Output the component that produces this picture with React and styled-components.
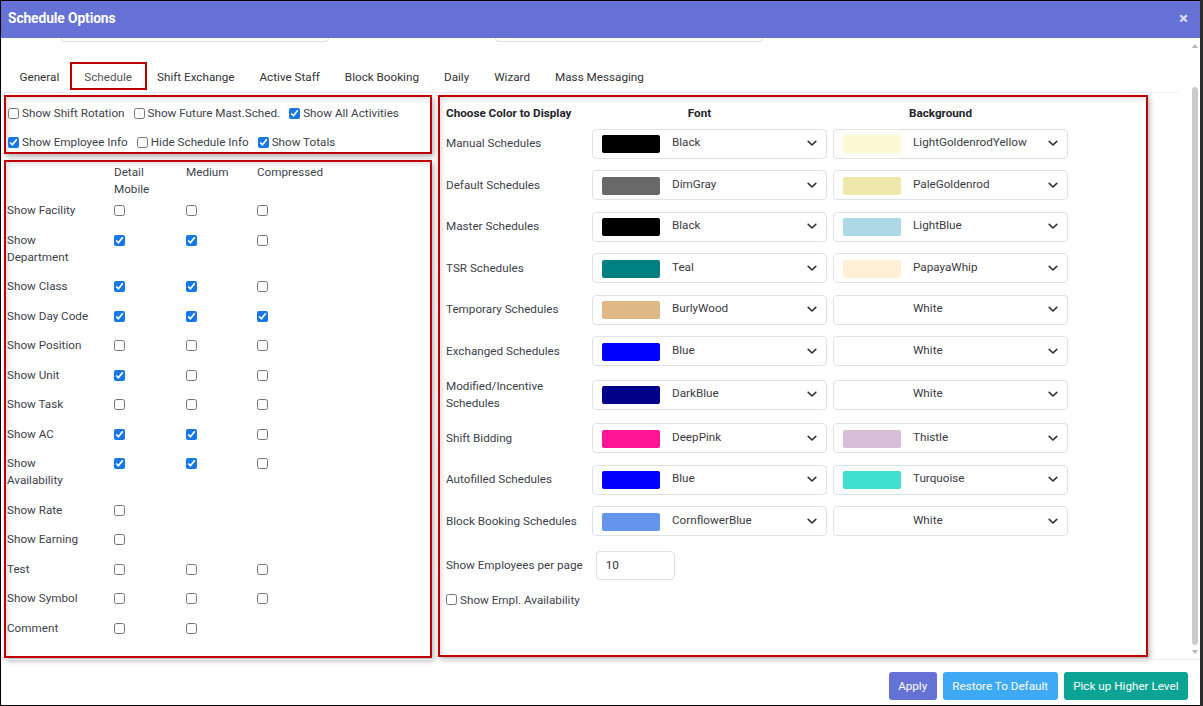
import React from "react";
import styled, { createGlobalStyle } from "styled-components";

const FS = "11.7px";

const GlobalStyle = createGlobalStyle`
  html, body { margin: 0; padding: 0; background: #2b2b2b; }
  body { font-family: Roboto, "Liberation Sans", Arial, sans-serif; }
  * { box-sizing: border-box; }
`;

const Page = styled.div`
  display: flex;
  width: 1203px;
  height: 706px;
  overflow: hidden;
`;

const Modal = styled.div`
  width: 1200px;
  height: 706px;
  background: #fff;
  border-left: 1px solid #000;
  border-top: 1px solid #000;
  border-bottom: 1px solid #000;
  display: flex;
  flex-direction: column;
`;

const TitleBar = styled.div`
  height: 37px;
  flex: none;
  background: #6571d5;
  display: flex;
  align-items: center;
  justify-content: space-between;
  padding: 0 12px 3px 7px;
`;

const Title = styled.div`
  color: #fff;
  font-weight: 700;
  font-size: 13.8px;
  letter-spacing: -0.1px;
`;

const Close = styled.div`
  color: #dcdff5;
  font-weight: 700;
  font-size: 17px;
  line-height: 1;
`;

const Body = styled.div`
  flex: 1;
  display: flex;
  min-height: 0;
`;

const Content = styled.div`
  flex: 1;
  min-width: 0;
  display: flex;
  flex-direction: column;
`;

const PeekRow = styled.div`
  height: 4px;
  display: flex;
  align-items: flex-end;
  overflow: hidden;
`;

const PeekInput = styled.div`
  height: 30px;
  flex: none;
  width: ${(p) => p.$w}px;
  margin-left: ${(p) => p.$ml}px;
  border: 1px solid #dfe2e6;
  border-top: none;
  border-radius: 0 0 4px 4px;
`;

const Tabs = styled.div`
  display: flex;
  padding: 22px 0 4px 6px;
  margin-right: 11px;
  border-bottom: 1px solid #eceef0;
`;

const Tab = styled.div`
  height: 24px;
  line-height: 21px;
  padding: 3px 12.5px 0;
  font-size: ${FS};
  color: ${(p) => (p.$active ? "#555" : "#333")};
  outline: ${(p) => (p.$active ? "2px solid #c00000" : "none")};
  white-space: nowrap;
`;

const Panels = styled.div`
  display: flex;
  align-items: flex-start;
  gap: 6px;
  margin: 2px 0 0 3px;
`;

const LeftColumn = styled.div`
  width: 428px;
  display: flex;
  flex-direction: column;
  gap: 6px;
`;

const Card = styled.div`
  border: 2px solid #c00000;
  background: #fff;
  box-shadow: 2px 3px 5px rgba(0, 0, 0, 0.28), inset 4px 4px 5px -2px rgba(0, 0, 0, 0.13);
  height: ${(p) => p.$h}px;
  width: ${(p) => (p.$w ? `${p.$w}px` : "auto")};
  padding: ${(p) => p.$pad};
`;

const CheckRow = styled.div`
  display: flex;
  align-items: center;
  height: 18px;
  & + & { margin-top: 11px; }
`;

const CheckLabel = styled.label`
  display: inline-flex;
  align-items: center;
  gap: 3px;
  margin-right: 9px;
  font-size: ${FS};
  color: #3d3f4a;
  white-space: nowrap;
`;

const Check = styled.input.attrs({ type: "checkbox" })`
  width: 11px;
  height: 11px;
  margin: 0;
  flex: none;
  accent-color: #1677e6;
`;

const GridRow = styled.div`
  display: grid;
  grid-template-columns: 107px 72px 71px 1fr;
  line-height: 17px;
  font-size: ${FS};
  color: #3d3f4a;
  padding: ${(p) => (p.$header ? "2px 0 0" : "6px 0 6.5px")};
  height: ${(p) => (p.$header ? "34px" : "auto")};
`;

const RowLabel = styled.div`
  padding-right: 20px;
`;

const HeadCell = styled.div`
  padding-right: 12px;
`;

const BoxCell = styled.div`
  height: 17px;
  display: flex;
  align-items: center;
`;

const ColorHeader = styled.div`
  display: grid;
  grid-template-columns: 140px 235px 235px;
  column-gap: 6px;
  line-height: 17px;
  font-size: ${FS};
  font-weight: 700;
  color: #23242b;
  margin-bottom: 7px;
`;

const HeadCenter = styled.div`
  text-align: center;
  padding-right: 20px;
`;

const ColorRow = styled.div`
  display: grid;
  grid-template-columns: 140px 235px 235px;
  column-gap: 6px;
  align-items: center;
  min-height: 30px;
  line-height: 17px;
  font-size: ${FS};
  color: #3d3f4a;
  margin-bottom: 11.5px;
`;

const Select = styled.div`
  height: 30px;
  border: 1px solid #dfe2e7;
  border-radius: 4px;
  display: flex;
  align-items: center;
  padding: 0 9px;
  font-size: ${FS};
  color: #3a3b44;
`;

const Swatch = styled.div`
  width: 58px;
  height: 18px;
  border-radius: 2px;
  flex: none;
  background: ${(p) => p.$c};
  margin-top: 1px;
`;

const SelectText = styled.div`
  margin-left: 12px;
  flex: 1;
  margin-top: -2px;
`;

const Chevron = () => (
  <svg width="10" height="7" viewBox="0 0 10 7" style={{ flex: "none" }}>
    <path d="M1.2 1.4 L5 5 L8.8 1.4" fill="none" stroke="#2f3038" strokeWidth="1.6" strokeLinecap="round" strokeLinejoin="round" />
  </svg>
);

const PerPageRow = styled.div`
  display: flex;
  align-items: center;
  gap: 13px;
  margin-top: 14.5px;
  font-size: ${FS};
  color: #3d3f4a;
`;

const NumberInput = styled.div`
  width: 79px;
  height: 29px;
  border: 1px solid #dfe2e7;
  border-radius: 4px;
  padding-left: 9px;
  display: flex;
  align-items: center;
  color: #333;
`;

const AvailRow = styled.div`
  margin-top: 11.5px;
  height: 17px;
  display: flex;
  align-items: center;
`;

const Scrollbar = styled.div`
  width: 11px;
  flex: none;
  display: flex;
  flex-direction: column;
  align-items: center;
  padding-top: 4px;
`;

const Arrow = styled.div`
  width: 0;
  height: 0;
  border-left: 3px solid transparent;
  border-right: 3px solid transparent;
  ${(p) => (p.$down ? "border-top: 4px solid #b5b5b5;" : "border-bottom: 4px solid #b5b5b5;")}
  margin-top: ${(p) => p.$mt}px;
`;

const Thumb = styled.div`
  width: 6px;
  height: 558px;
  margin-top: 39px;
  border-radius: 3px;
  background: #cbcbcb;
`;

const Footer = styled.div`
  flex: none;
  height: 46px;
  border-top: 1px solid #e9ebee;
  display: flex;
  justify-content: flex-end;
  align-items: flex-start;
  gap: 6px;
  padding: 12px 12px 0 0;
`;

const Button = styled.button`
  height: 28px;
  border: none;
  border-radius: 3px;
  padding: 0 9.5px;
  background: ${(p) => p.$bg};
  color: #fff;
  font-family: Roboto, "Liberation Sans", Arial, sans-serif;
  font-size: ${FS};
`;

const tabs = ["General", "Schedule", "Shift Exchange", "Active Staff", "Block Booking", "Daily", "Wizard", "Mass Messaging"];

const tableRows = [
  ["Show Facility", [false, false, false]],
  ["Show Department", [true, true, false]],
  ["Show Class", [true, true, false]],
  ["Show Day Code", [true, true, true]],
  ["Show Position", [false, false, false]],
  ["Show Unit", [true, false, false]],
  ["Show Task", [false, false, false]],
  ["Show AC", [true, true, false]],
  ["Show Availability", [true, true, false]],
  ["Show Rate", [false]],
  ["Show Earning", [false]],
  ["Test", [false, false, false]],
  ["Show Symbol", [false, false, false]],
  ["Comment", [false, false]],
];

const colorRows = [
  ["Manual Schedules", ["#000000", "Black"], ["#fafad2", "LightGoldenrodYellow"]],
  ["Default Schedules", ["#696969", "DimGray"], ["#eee8aa", "PaleGoldenrod"]],
  ["Master Schedules", ["#000000", "Black"], ["#add8e6", "LightBlue"]],
  ["TSR Schedules", ["#008080", "Teal"], ["#ffefd5", "PapayaWhip"]],
  ["Temporary Schedules", ["#deb887", "BurlyWood"], ["#ffffff", "White"]],
  ["Exchanged Schedules", ["#0000ff", "Blue"], ["#ffffff", "White"]],
  ["Modified/Incentive Schedules", ["#00008b", "DarkBlue"], ["#ffffff", "White"]],
  ["Shift Bidding", ["#ff1493", "DeepPink"], ["#d8bfd8", "Thistle"]],
  ["Autofilled Schedules", ["#0000ff", "Blue"], ["#40e0d0", "Turquoise"]],
  ["Block Booking Schedules", ["#6495ed", "CornflowerBlue"], ["#ffffff", "White"]],
];

const ColorSelect = ({ color, name }) => (
  <Select>
    <Swatch $c={color} />
    <SelectText>{name}</SelectText>
    <Chevron />
  </Select>
);

export default function App() {
  return (
    <>
      <GlobalStyle />
      <Page>
        <Modal>
          <TitleBar>
            <Title>Schedule Options</Title>
            <Close>×</Close>
          </TitleBar>
          <Body>
            <Content>
              <PeekRow>
                <PeekInput $ml={60} $w={268} />
                <PeekInput $ml={166} $w={268} />
              </PeekRow>
              <Tabs>
                {tabs.map((t) => (
                  <Tab key={t} $active={t === "Schedule"}>{t}</Tab>
                ))}
              </Tabs>
              <Panels>
                <LeftColumn>
                  <Card $h={59} $pad="7px 0 0 2px">
                    <CheckRow>
                      <CheckLabel><Check />Show Shift Rotation</CheckLabel>
                      <CheckLabel><Check />Show Future Mast.Sched.</CheckLabel>
                      <CheckLabel><Check defaultChecked />Show All Activities</CheckLabel>
                    </CheckRow>
                    <CheckRow>
                      <CheckLabel><Check defaultChecked />Show Employee Info</CheckLabel>
                      <CheckLabel><Check />Hide Schedule Info</CheckLabel>
                      <CheckLabel><Check defaultChecked />Show Totals</CheckLabel>
                    </CheckRow>
                  </Card>
                  <Card $h={498} $pad="0 0 0 1px">
                    <GridRow $header>
                      <div />
                      <HeadCell>Detail Mobile</HeadCell>
                      <HeadCell>Medium</HeadCell>
                      <HeadCell>Compressed</HeadCell>
                    </GridRow>
                    {tableRows.map(([label, boxes]) => (
                      <GridRow key={label}>
                        <RowLabel>{label}</RowLabel>
                        {boxes.map((c, i) => (
                          <BoxCell key={i}><Check defaultChecked={c} /></BoxCell>
                        ))}
                      </GridRow>
                    ))}
                  </Card>
                </LeftColumn>
                <Card $h={562} $w={710} $pad="7.5px 0 0 6px">
                  <ColorHeader>
                    <div>Choose Color to Display</div>
                    <HeadCenter>Font</HeadCenter>
                    <HeadCenter>Background</HeadCenter>
                  </ColorHeader>
                  {colorRows.map(([label, font, bg]) => (
                    <ColorRow key={label}>
                      <div>{label}</div>
                      <ColorSelect color={font[0]} name={font[1]} />
                      <ColorSelect color={bg[0]} name={bg[1]} />
                    </ColorRow>
                  ))}
                  <PerPageRow>
                    <span>Show Employees per page</span>
                    <NumberInput>10</NumberInput>
                  </PerPageRow>
                  <AvailRow>
                    <CheckLabel><Check />Show Empl. Availability</CheckLabel>
                  </AvailRow>
                </Card>
              </Panels>
            </Content>
            <Scrollbar>
              <Arrow $mt={2} />
              <Thumb />
              <Arrow $down $mt={5} />
            </Scrollbar>
          </Body>
          <Footer>
            <Button $bg="#6571d5">Apply</Button>
            <Button $bg="#3ea9f5">Restore To Default</Button>
            <Button $bg="#0ba394">Pick up Higher Level</Button>
          </Footer>
        </Modal>
      </Page>
    </>
  );
}
